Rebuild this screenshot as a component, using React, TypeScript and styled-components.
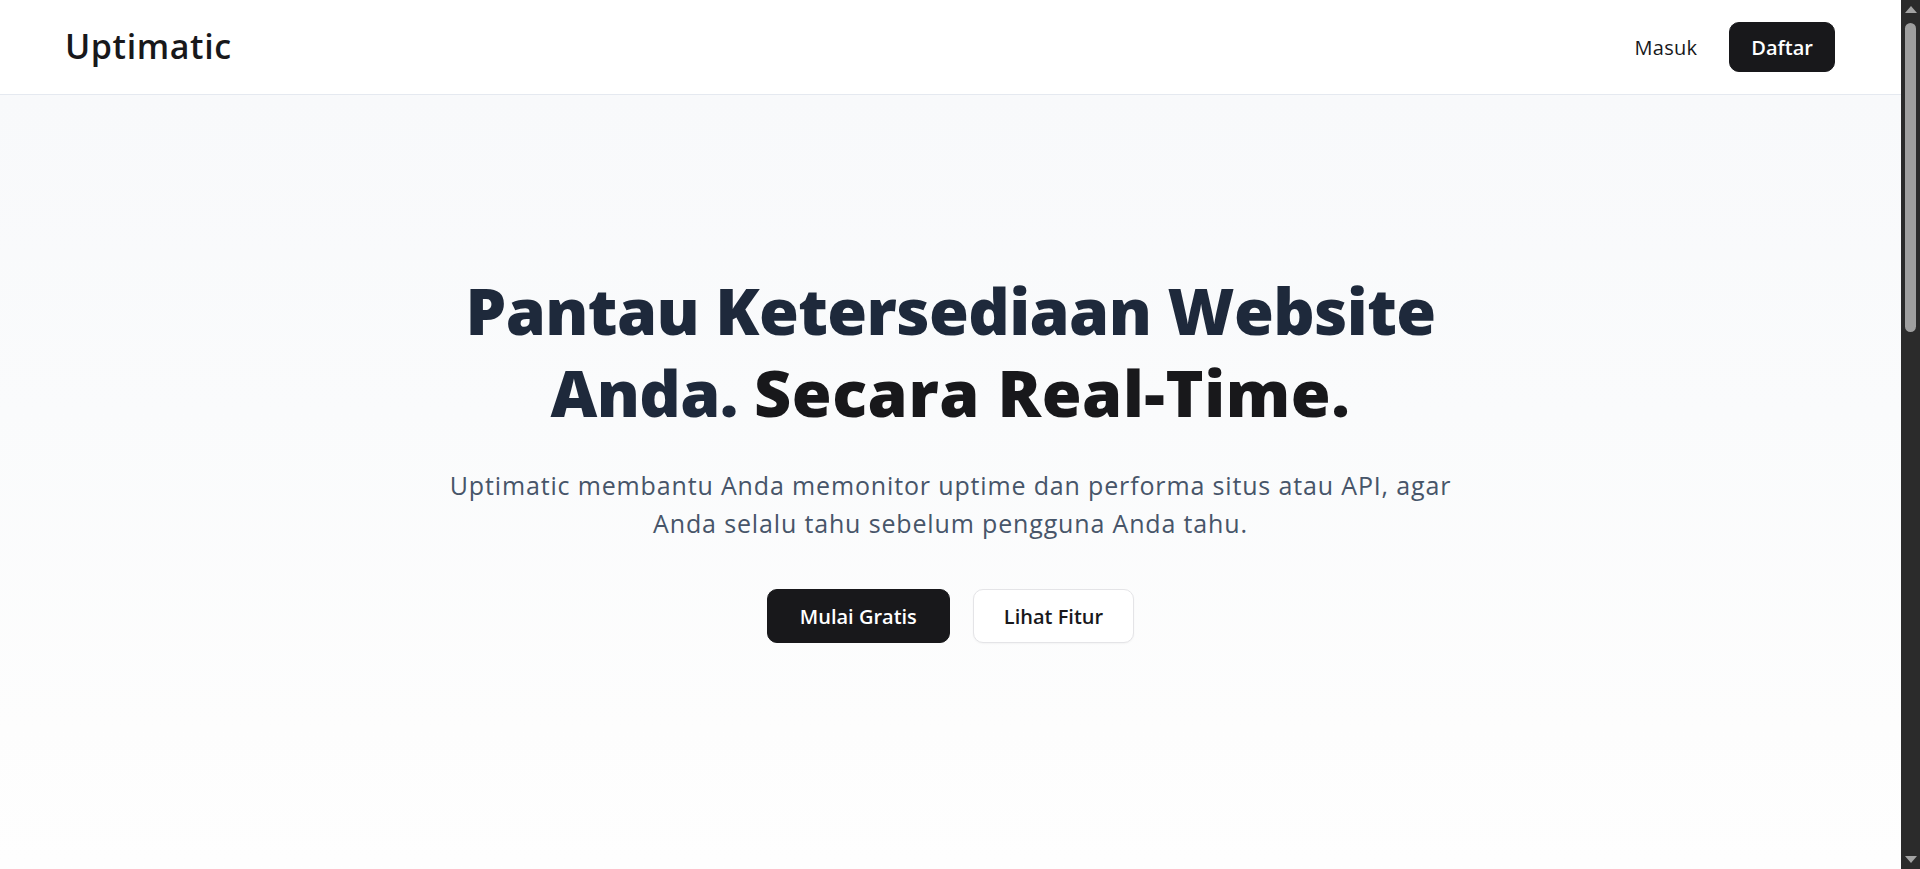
import React, { useCallback, useEffect, useRef, useState } from "react";
import styled, { createGlobalStyle } from "styled-components";

const Global = createGlobalStyle`
  html, body {
    margin: 0;
    height: 100%;
    background: #ffffff;
  }
  body {
    color: #18181b;
    font-family: "Open Sans", "Noto Sans", sans-serif;
    -webkit-font-smoothing: antialiased;
    overflow: hidden;
  }
  * {
    box-sizing: border-box;
  }
`;

const Shell = styled.div`
  display: flex;
  height: 100vh;
  overflow: hidden;
`;

const Main = styled.main`
  flex: 1;
  min-width: 0;
  height: 100vh;
  overflow-y: auto;
  scrollbar-width: none;
  background: #ffffff;
  &::-webkit-scrollbar {
    display: none;
  }
`;

/* Custom scrollbar drawn beside the scroll area */
const ScrollRail = styled.div`
  width: 19px;
  flex: none;
  height: 100vh;
  display: flex;
  flex-direction: column;
  background: #2b2b2b;
`;

const RailArrow = styled.div<{ $dir: "up" | "down" }>`
  height: 19px;
  flex: none;
  display: flex;
  justify-content: center;
  align-items: ${(p) => (p.$dir === "up" ? "flex-start" : "flex-end")};
  padding: ${(p) => (p.$dir === "up" ? "6px 0 0" : "0 0 6px")};
  &::before {
    content: "";
    width: 0;
    height: 0;
    border-left: 6px solid transparent;
    border-right: 6px solid transparent;
    ${(p) => (p.$dir === "up" ? "border-bottom: 7px solid #a3a3a3;" : "border-top: 7px solid #a3a3a3;")}
  }
`;

const RailTrack = styled.div`
  flex: 1;
  padding: 4px 0;
  display: flex;
  flex-direction: column;
  align-items: center;
`;

const RailThumb = styled.div`
  width: 11px;
  border-radius: 6px;
  background: #9f9f9f;
  flex: none;
`;

const NavBar = styled.header`
  height: 95px;
  display: flex;
  align-items: center;
  justify-content: space-between;
  padding: 0 66px 0 65px;
  background: #ffffff;
  border-bottom: 1px solid #e5e9f0;
`;

const Logo = styled.a`
  font-size: 34px;
  font-weight: 600;
  letter-spacing: 0.6px;
  color: #18181b;
  text-decoration: none;
  margin-top: -2px;
`;

const NavActions = styled.nav`
  display: flex;
  align-items: center;
  gap: 32px;
`;

const NavLink = styled.a`
  font-size: 20px;
  font-weight: 500;
  letter-spacing: 0.3px;
  color: #18181b;
  text-decoration: none;
`;

const Button = styled.a<{ $variant?: "solid" | "outline"; $size?: "sm" | "lg" }>`
  display: inline-flex;
  align-items: center;
  justify-content: center;
  height: ${(p) => (p.$size === "sm" ? "50px" : "54px")};
  padding: 0 ${(p) => (p.$size === "sm" ? "21px" : p.$variant === "outline" ? "30px" : "32px")};
  border-radius: 10px;
  font-size: 20px;
  font-weight: 600;
  text-decoration: none;
  white-space: nowrap;
  background: ${(p) => (p.$variant === "outline" ? "#ffffff" : "#18181b")};
  color: ${(p) => (p.$variant === "outline" ? "#18181b" : "#ffffff")};
  border: ${(p) => (p.$variant === "outline" ? "1px solid #e4e4e7" : "1px solid #18181b")};
  box-shadow: ${(p) => (p.$variant === "outline" ? "0 1px 2px rgba(0,0,0,0.04)" : "none")};
`;

const Hero = styled.section`
  min-height: 905px;
  display: flex;
  flex-direction: column;
  align-items: center;
  padding: 174px 24px 120px;
  background: linear-gradient(180deg, #f8f9fb 0%, #fafbfc 35%, #fdfdfd 70%, #ffffff 100%);
`;

const HeroInner = styled.div`
  max-width: 1024px;
  display: flex;
  flex-direction: column;
  align-items: center;
  text-align: center;
`;

const Title = styled.h1`
  margin: 0;
  font-size: 64.5px;
  font-weight: 800;
  line-height: 82px;
  letter-spacing: -0.6px;
  color: #1e293b;
`;

const Accent = styled.span`
  color: #18181b;
  letter-spacing: 0.6px;
`;

const Lead = styled.p`
  margin: 34px 0 0;
  font-size: 25px;
  font-weight: 400;
  line-height: 37.5px;
  letter-spacing: 0.85px;
  color: #475569;
`;

const Actions = styled.div`
  display: flex;
  gap: 23px;
  margin-top: 47px;
`;

const FeaturesAnchor = styled.section`
  min-height: 1316px;
  background: #ffffff;
`;

export default function App() {
  const mainRef = useRef<HTMLElement>(null);
  const trackRef = useRef<HTMLDivElement>(null);
  const [thumb, setThumb] = useState({ size: 309, offset: 0 });

  const update = useCallback(() => {
    const m = mainRef.current;
    const t = trackRef.current;
    if (!m || !t) return;
    const track = t.clientHeight - 8;
    const size = Math.max(40, (track * m.clientHeight) / m.scrollHeight);
    const range = m.scrollHeight - m.clientHeight;
    const offset = range > 0 ? ((track - size) * m.scrollTop) / range : 0;
    setThumb({ size, offset });
  }, []);

  useEffect(() => {
    update();
    window.addEventListener("resize", update);
    return () => window.removeEventListener("resize", update);
  }, [update]);

  return (
    <Shell>
      <Global />
      <Main ref={mainRef} onScroll={update}>
        <NavBar>
          <Logo href="#">Uptimatic</Logo>
          <NavActions>
            <NavLink href="#">Masuk</NavLink>
            <Button href="#" $size="sm">
              Daftar
            </Button>
          </NavActions>
        </NavBar>
        <Hero>
          <HeroInner>
            <Title>
              Pantau Ketersediaan Website Anda. <Accent>Secara Real-Time.</Accent>
            </Title>
            <Lead>
              Uptimatic membantu Anda memonitor uptime dan performa situs atau API, agar Anda selalu tahu sebelum
              pengguna Anda tahu.
            </Lead>
            <Actions>
              <Button href="#">Mulai Gratis</Button>
              <Button href="#fitur" $variant="outline">
                Lihat Fitur
              </Button>
            </Actions>
          </HeroInner>
        </Hero>
        <FeaturesAnchor id="fitur" />
      </Main>
      <ScrollRail aria-hidden="true">
        <RailArrow $dir="up" />
        <RailTrack ref={trackRef}>
          <RailThumb style={{ height: thumb.size, transform: `translateY(${thumb.offset}px)` }} />
        </RailTrack>
        <RailArrow $dir="down" />
      </ScrollRail>
    </Shell>
  );
}
